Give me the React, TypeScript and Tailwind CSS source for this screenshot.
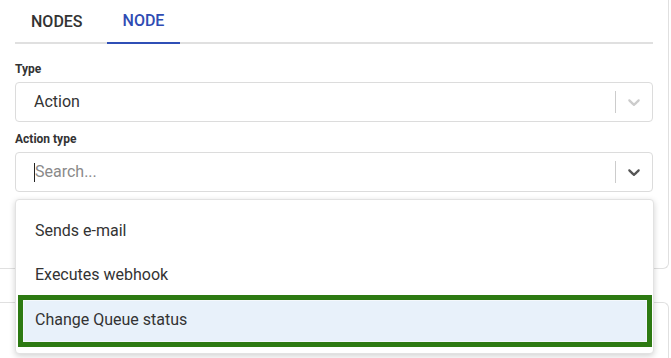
import React from "react";

function Chevron({ className }: { className?: string }) {
  return (
    <svg viewBox="0 0 20 20" width="20" height="20" className={className} fill="currentColor">
      <path d="M4.516 7.548c0.436-0.446 1.043-0.481 1.576 0l3.908 3.747 3.908-3.747c0.533-0.481 1.141-0.446 1.574 0 0.436 0.445 0.408 1.197 0 1.615-0.406 0.418-4.695 4.502-4.695 4.502-0.217 0.223-0.502 0.335-0.787 0.335s-0.57-0.112-0.789-0.335c0 0-4.287-4.084-4.695-4.502s-0.436-1.17 0-1.615z" />
    </svg>
  );
}

function SelectBox({
  children,
  chevronClass,
}: {
  children: React.ReactNode;
  chevronClass: string;
}) {
  return (
    <div className="flex h-[40px] items-center rounded-[4px] border border-[#dcdcdc] bg-white">
      <div className="flex flex-1 items-center pl-[18px] text-[16px] text-[#333]">{children}</div>
      <span className="h-[22px] w-px bg-[#cccccc]" />
      <div className="flex w-[36px] items-center justify-center">
        <Chevron className={chevronClass} />
      </div>
    </div>
  );
}

export default function App() {
  return (
    <div
      className="relative h-[358px] w-[671px] overflow-hidden bg-white"
      style={{ fontFamily: "Roboto, 'Liberation Sans', sans-serif" }}
    >
      <div className="h-[269px] w-[669px] rounded-br-[6px] border-r border-b border-[#e0e0e0] px-[15px]">
        <div className="flex h-[44px] border-b-2 border-[#e0e0e0]">
          <div className="flex h-[42px] items-center px-4 pt-[1px] text-[16px] font-medium text-[#333]">NODES</div>
          <div className="ml-[8px] -mb-[2px] flex h-[44px] items-center border-b-2 border-[#2f4fb6] px-[16px] pt-[1px] pb-[2px] text-[16px] font-medium text-[#2f4cb3]">
            NODE
          </div>
        </div>

        <div className="mt-[17px] mb-[5px] text-[12px] leading-[16px] font-bold text-[#333]">Type</div>
        <SelectBox chevronClass="text-[#cccccc]">Action</SelectBox>

        <div className="mt-[9px] mb-[5px] text-[12px] leading-[16px] font-bold text-[#333]">Action type</div>
        <SelectBox chevronClass="text-[#555]">
          <span className="h-[19px] w-px bg-[#222]" />
          <span className="text-[#8a8a8a]">Search...</span>
        </SelectBox>
      </div>

      <div className="mt-[33px] h-[60px] w-[669px] rounded-tr-[6px] border-t border-r border-[#e0e0e0]" />

      <div className="absolute top-[199px] left-[15px] w-[639px] rounded-[4px] border border-[#e2e2e2] bg-white pt-[9px] pb-[6px] shadow-[0_2px_6px_rgba(0,0,0,0.18)]">
        <div className="flex h-[44px] items-center pl-[19px] text-[16px] text-[#333]">Sends e-mail</div>
        <div className="flex h-[44px] items-center pl-[19px] text-[16px] text-[#333]">Executes webhook</div>
        <div className="-mt-[2px] mr-[1px] ml-[2px] h-[52px] border-[5px] border-[#2d7a12]">
          <div className="flex h-full items-center border border-[#f4f8fc] bg-[#e8f1fa] pb-[2px] pl-[11px] text-[16px] text-[#333]">
            Change Queue status
          </div>
        </div>
      </div>
    </div>
  );
}
